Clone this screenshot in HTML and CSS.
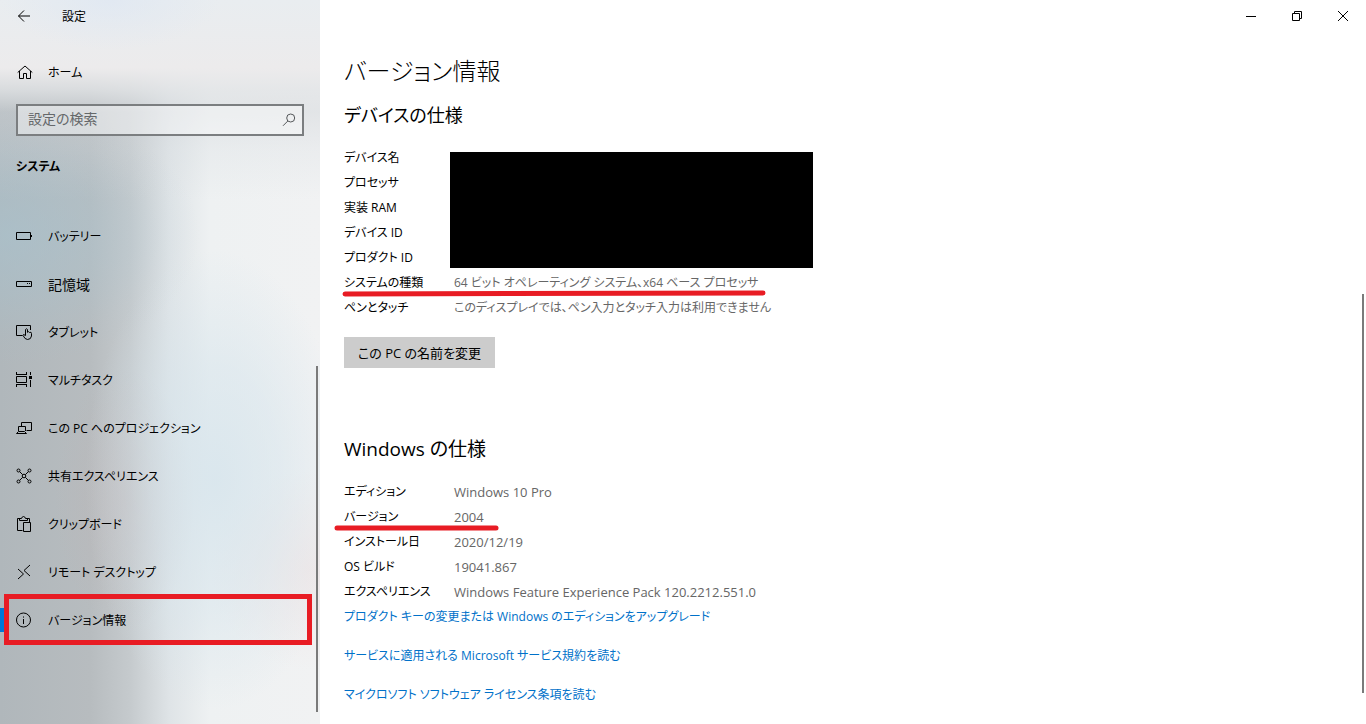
FILE: index.html
```html
<!DOCTYPE html>
<html lang="ja">
<head>
<meta charset="utf-8">
<meta name="viewport" content="width=device-width, initial-scale=1">
<title>設定</title>
<link rel="stylesheet" href="styles.css">
</head>
<body>
<div class="window">
  <aside class="sidebar">
    <header class="titlebar">
      <button class="back" type="button" aria-label="戻る">
        <svg class="icon" viewBox="0 0 16 16"><path d="M14 8H2.5M8 2.5L2.5 8L8 13.5"/></svg>
      </button>
      <span class="app-name">設定</span>
    </header>
    <a class="nav-link home" href="#home">
      <svg class="icon" viewBox="0 0 16 16"><path d="M1.7 8.5L9 2L16.3 8.5M3.5 7V14.5H7.5V9.5H10.5V14.5H14.5V7"/></svg>
      <span>ホーム</span>
    </a>
    <form class="search" role="search">
      <input class="search-input" type="text" placeholder="設定の検索" aria-label="設定の検索">
      <button class="search-button" type="button" aria-label="検索">
        <svg class="icon" viewBox="0 0 16 16"><circle cx="9.7" cy="6" r="4"/><path d="M6.8 9L2 13.8"/></svg>
      </button>
    </form>
    <h2 class="group">システム</h2>
    <nav class="nav">
      <a class="nav-link" href="#battery">
        <svg class="icon" viewBox="0 0 16 16"><path d="M.5 4.5H14.5V11.5H.5ZM15.5 7V9"/></svg>
        <span>バッテリー</span>
      </a>
      <a class="nav-link kanji" href="#storage">
        <svg class="icon" viewBox="0 0 16 16"><path d="M.5 5.5H15.5V10.5H.5ZM11 7.5H12M13 7.5H14"/></svg>
        <span>記憶域</span>
      </a>
      <a class="nav-link" href="#tablet">
        <svg class="icon" viewBox="0 0 16 16"><path d="M6.5 11.5H.5V1.5H14.5V6M9.5 11.5V5.5Q10.5 4 11.5 5.5V8.5M11.5 8Q12.5 7 13.5 8.5Q15.5 7.5 15.5 9.5V12Q15 15.5 11.5 15.5Q9 15.5 7 11.5Q6.8 9.5 9.5 11.5"/></svg>
        <span>タブレット</span>
      </a>
      <a class="nav-link" href="#multitask">
        <svg class="icon" viewBox="0 0 16 16"><path d="M0 2.5H11M.5 0V3M10.5 0V3M.5 4.5H10.5V10.5H.5ZM0 12.5H11M.5 12V15M10.5 12V15M14.5 0V3M14.5 8V15"/><path class="solid" d="M13 4H16V7H13Z"/></svg>
        <span>マルチタスク</span>
      </a>
      <a class="nav-link" href="#projecting">
        <svg class="icon" viewBox="0 0 16 16"><path d="M5.5 6V2.5H15.5V10.5H10.5M2.5 11V6.5H9.5V11M.5 13.5H10.5L8.5 11.5H2.5Z"/></svg>
        <span>この PC へのプロジェクション</span>
      </a>
      <a class="nav-link" href="#shared">
        <svg class="icon" viewBox="0 0 16 16"><circle cx="8" cy="8" r="1.8"/><circle cx="2.5" cy="2.5" r="1.5"/><circle cx="13.5" cy="2.5" r="1.5"/><circle cx="2.5" cy="13.5" r="1.5"/><circle cx="13.5" cy="13.5" r="1.5"/><path d="M3.6 3.6L6.7 6.7M12.4 3.6L9.3 6.7M3.6 12.4L6.7 9.3M12.4 12.4L9.3 9.3"/></svg>
        <span>共有エクスペリエンス</span>
      </a>
      <a class="nav-link" href="#clipboard">
        <svg class="icon" viewBox="0 0 16 16"><path d="M6.5 14.5H1.5V2.5H4M11 2.5H13.5V6M3.5 4.5V2.5H5.5Q6 .5 7.5 .5Q9 .5 9.5 2.5H11.5V4.5ZM7.5 6.5H14.5V15.5H7.5Z"/></svg>
        <span>クリップボード</span>
      </a>
      <a class="nav-link" href="#remote">
        <svg class="icon" viewBox="0 0 16 16"><path d="M2 5L7.5 10L2 15M14 1L8 6.5L14 12"/></svg>
        <span>リモート デスクトップ</span>
      </a>
      <a class="nav-link current" href="#about" aria-current="page">
        <svg class="icon" viewBox="0 0 16 16"><circle cx="7.5" cy="8" r="7"/><path d="M7.5 7V12M7.5 4.5V5.6"/></svg>
        <span>バージョン情報</span>
      </a>
    </nav>
    <span class="thumb side-thumb"></span>
  </aside>

  <main class="main">
    <div class="controls">
      <button class="control" type="button" aria-label="最小化"><svg class="icon" viewBox="0 0 16 16"><path d="M3 8.5H13"/></svg></button>
      <button class="control" type="button" aria-label="元に戻す"><svg class="icon" viewBox="0 0 16 16"><path d="M3.5 5.5H10.5V12.5H3.5ZM5.5 5.5V3.5H12.5V10.5H10.5"/></svg></button>
      <button class="control" type="button" aria-label="閉じる"><svg class="icon" viewBox="0 0 16 16"><path d="M3 3L13 13M13 3L3 13"/></svg></button>
    </div>
    <div class="content">
      <h1 class="title">バージョン情報</h1>
      <section class="section device">
        <h2 class="heading">デバイスの仕様</h2>
        <table class="specs">
          <tr><th scope="row">デバイス名</th><td class="hidden-cell" rowspan="5"><div class="redaction"></div></td></tr>
          <tr><th scope="row">プロセッサ</th></tr>
          <tr><th scope="row">実装 RAM</th></tr>
          <tr><th scope="row">デバイス ID</th></tr>
          <tr><th scope="row">プロダクト ID</th></tr>
          <tr class="marked"><th scope="row">システムの種類</th><td>64 ビット オペレーティング システム、x64 ベース プロセッサ<svg class="mark mark-type" viewBox="0 0 426 8"><path d="M3 5L421 4"/></svg></td></tr>
          <tr><th scope="row">ペンとタッチ</th><td>このディスプレイでは、ペン入力とタッチ入力は利用できません</td></tr>
        </table>
        <button class="rename" type="button">この PC の名前を変更</button>
      </section>
      <section class="section">
        <h2 class="heading latin-heading">Windows の仕様</h2>
        <table class="specs latin-values">
          <tr><th scope="row">エディション</th><td>Windows 10 Pro</td></tr>
          <tr class="marked"><th scope="row">バージョン</th><td>2004<svg class="mark mark-version" viewBox="0 0 166 8"><path d="M3 5H162"/></svg></td></tr>
          <tr><th scope="row">インストール日</th><td>2020/12/19</td></tr>
          <tr><th scope="row">OS ビルド</th><td>19041.867</td></tr>
          <tr><th scope="row">エクスペリエンス</th><td>Windows Feature Experience Pack 120.2212.551.0</td></tr>
        </table>
        <div class="links">
          <a href="#upgrade">プロダクト キーの変更または Windows のエディションをアップグレード</a>
          <a href="#terms">サービスに適用される Microsoft サービス規約を読む</a>
          <a href="#license">マイクロソフト ソフトウェア ライセンス条項を読む</a>
        </div>
      </section>
    </div>
    <span class="thumb main-thumb"></span>
  </main>
</div>
</body>
</html>
```
FILE: styles.css
```css
* { box-sizing: border-box; }

body {
  margin: 0;
  background: #fff;
  color: #000;
  font-family: "Open Sans", "Noto Sans CJK JP", sans-serif;
  font-size: 12px;
  line-height: 20px;
  font-feature-settings: "palt";
}

button, input {
  font: inherit;
  font-feature-settings: inherit;
  color: inherit;
}

button {
  border: 0;
  padding: 0;
  background: none;
}

a { text-decoration: none; }

.window {
  display: flex;
  min-height: 100vh;
}

.icon {
  width: 16px;
  height: 16px;
  flex: none;
  display: block;
  overflow: visible;
  fill: none;
  stroke: currentColor;
  stroke-width: 1;
}

.icon .solid {
  fill: currentColor;
  stroke: none;
}

/* Sidebar */
.sidebar {
  position: relative;
  flex: 0 0 320px;
  background:
    radial-gradient(ellipse 190px 130px at 10px 235px, rgba(168, 195, 207, 0.6), rgba(168, 195, 207, 0.35) 45%, rgba(168, 195, 207, 0.08) 80%, rgba(168, 195, 207, 0)),
    radial-gradient(ellipse 130px 230px at 215px 480px, rgba(213, 228, 236, 0.8), rgba(213, 228, 236, 0.5) 50%, rgba(213, 228, 236, 0)),
    radial-gradient(ellipse 70px 130px at 125px 500px, rgba(190, 178, 178, 0.45), rgba(190, 178, 178, 0)),
    radial-gradient(ellipse 100px 100px at 310px 570px, rgba(240, 228, 228, 0.7), rgba(240, 228, 228, 0)),
    radial-gradient(ellipse 110px 50px at 110px 0, rgba(220, 230, 243, 0.6), rgba(220, 230, 243, 0)),
    linear-gradient(#e9edf0, #ecebec 68px, rgba(226, 228, 230, 0.8) 90px, rgba(208, 212, 216, 0.45) 112px, rgba(215, 220, 224, 0.25) 150px, rgba(225, 230, 234, 0) 200px),
    linear-gradient(90deg, #b0b7bb, #b7bcbf 90px, #c5cacd 130px, #dfe4e7 170px, #eef1f2 210px, #f1f2f3);
}

.titlebar {
  display: flex;
  align-items: center;
  gap: 30px;
  height: 32px;
  padding-left: 16px;
}

.titlebar span, .nav-link span { padding-top: 2px; }

.nav-link {
  display: flex;
  align-items: center;
  gap: 16px;
  height: 48px;
  padding-left: 16px;
  color: #000;
}

.kanji { font-size: 14px; }

.home { margin-top: 16px; }

.search {
  display: flex;
  align-items: center;
  height: 32px;
  margin: 8px 16px 0;
  border: 2px solid #7b7e80;
  background: rgba(255, 255, 255, 0.4);
}

.search-input {
  flex: 1;
  min-width: 0;
  border: 0;
  outline: 0;
  padding: 0 10px 2px;
  background: none;
  font-size: 14px;
}

.search-input::placeholder {
  color: #65686a;
  opacity: 1;
}

.search-button {
  padding-right: 5px;
  color: #55585a;
}

.group {
  margin: 21px 16px 35px;
  font-size: 12px;
  font-weight: 700;
}

.current {
  position: relative;
}

.current::before {
  content: "";
  position: absolute;
  left: 0;
  top: 12px;
  width: 5px;
  height: 24px;
  background: #0078d7;
}

.current::after {
  content: "";
  position: absolute;
  inset: -2px 8px -1px 4px;
  border: 5px solid #e81c24;
}

.thumb {
  position: absolute;
  width: 2px;
  background: #7a7a7a;
}

.side-thumb {
  top: 366px;
  right: 2px;
  bottom: 12px;
}

/* Main */
.main {
  position: relative;
  flex: 1;
  min-width: 0;
}

.main-thumb {
  top: 294px;
  right: 2px;
  bottom: 31px;
}

.controls {
  display: flex;
  justify-content: flex-end;
}

.control {
  display: grid;
  place-items: center;
  width: 46px;
  height: 32px;
}

.content { padding: 19px 24px; }

.title {
  margin: 0;
  font-size: 24px;
  font-weight: 300;
  line-height: 40px;
}

.heading {
  margin: 9px 0 15px;
  font-size: 18px;
  font-weight: 400;
  line-height: 30px;
}

.latin-heading { font-size: 19px; }

.device { margin-bottom: 66px; }

.specs {
  border-collapse: collapse;
}

.specs tr { height: 25px; }

.specs th, .specs td {
  padding: 0;
  text-align: left;
  font-weight: 400;
  white-space: nowrap;
}

.specs th {
  width: 110px;
}

.specs td { color: #666; }

.latin-values td { font-size: 13px; }

.specs .hidden-cell {
  vertical-align: bottom;
  padding-bottom: 2px;
}

.redaction {
  width: 363px;
  height: 116px;
  margin-left: -4px;
  background: #000;
}

.marked { position: relative; }

.mark {
  position: absolute;
  top: 19px;
  height: 8px;
  fill: none;
  stroke: #e81c24;
  stroke-width: 5;
  stroke-linecap: round;
}

.mark-type {
  left: -2px;
  width: 426px;
}

.mark-version {
  left: -10px;
  width: 166px;
}

.rename {
  height: 31px;
  margin-top: 17px;
  padding: 0 14px;
  background: #ccc;
  font-size: 13px;
}

.links {
  display: flex;
  flex-direction: column;
  align-items: flex-start;
  gap: 19px;
  margin-top: 3px;
}

.links a { color: #0071c9; }
```
